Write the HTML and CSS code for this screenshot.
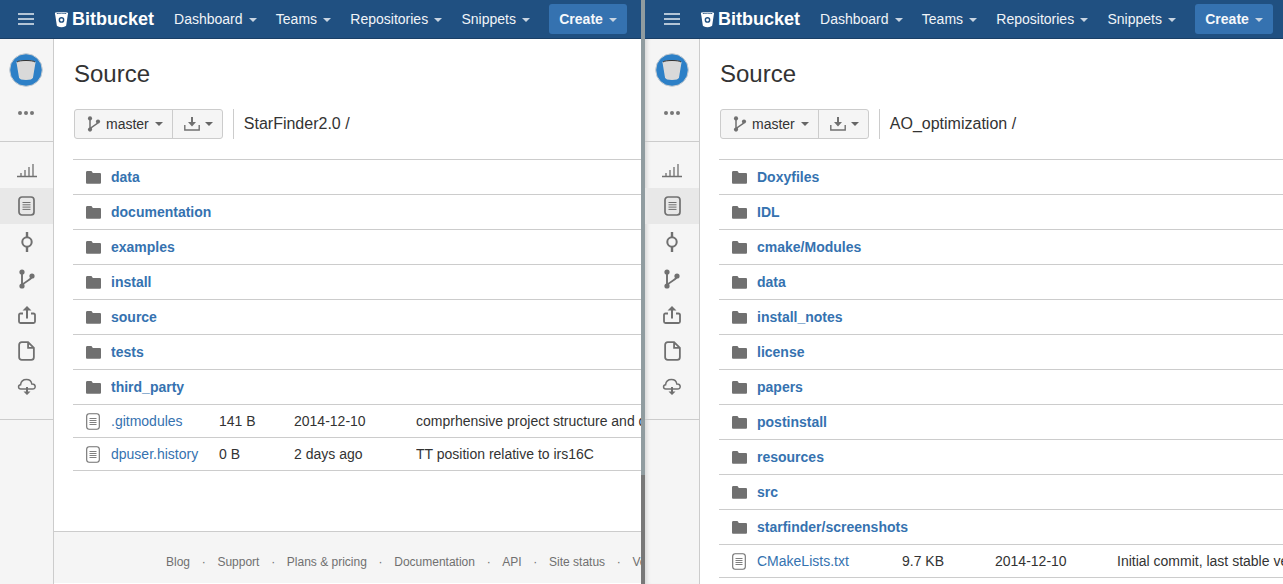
FILE: index.html
```html
<!DOCTYPE html>
<html lang="en">
  <head>
    <meta charset="UTF-8" />
    <title>Bitbucket Source</title>
    <link rel="stylesheet" href="styles.css">
  </head>
  <body>
    <svg class="defs" width="0" height="0">
      <defs>
        <symbol id="i-bucket" viewBox="0 0 16 18">
          <path fill="#fff" d="M1 2.200C1 .6 15 .6 15 2.200c0 .5-.2 1.500-.5 3L13 15.500c-.1.800-2 1.700-5 1.700s-4.900-.9-5-1.700L1.500 5.200C1.200 3.700 1 2.700 1 2.200z"/>
          <path fill="none" stroke="#205081" stroke-width="1" d="M3 2.600c2-.5 8-.5 10 0"/>
          <circle cx="8" cy="9.500" r="2.300" fill="none" stroke="#205081" stroke-width="1.500"/>
        </symbol>
        <symbol id="i-hamburger" viewBox="0 0 16 12">
          <path d="M0 1h16M0 6h16M0 11h16" stroke="#e4ebf2" stroke-width="1.500"/>
        </symbol>
        <symbol id="i-folder" viewBox="0 0 15 13">
          <path fill="#707070" d="M0 1.500C0 .7.500 0 1.300 0h3.400c.8 0 1.200.4 1.500 1L6.800 2h6.900c.8 0 1.300.5 1.300 1.300v8.200c0 .8-.5 1.300-1.300 1.300H1.300C.5 12.800 0 12.300 0 11.500z"/>
        </symbol>
        <symbol id="i-file" viewBox="0 0 14 17">
          <rect x=".7" y=".7" width="12.600" height="15.600" rx="2.500" fill="none" stroke="#707070" stroke-width="1.100"/>
          <path d="M3.500 5.500h7M3.500 7.500h7M3.500 9.500h7M3.500 11.500h7" stroke="#707070" stroke-width=".9"/>
        </symbol>
        <symbol id="i-file-nav" viewBox="0 0 17 20">
          <rect x="1" y="1" width="15" height="18" rx="3" fill="none" stroke="#707070" stroke-width="1.700"/>
          <path d="M4.500 6.500h8M4.500 8.800h8M4.500 11.100h8M4.500 13.400h8" stroke="#707070" stroke-width="1"/>
        </symbol>
        <symbol id="i-branch" viewBox="0 0 16 20">
          <circle cx="3" cy="3" r="2.600" fill="#707070"/>
          <circle cx="3" cy="17" r="2.600" fill="#707070"/>
          <circle cx="13" cy="7" r="2.600" fill="#707070"/>
          <path d="M3 3v14M13 7c0 4.500-7 4-10 10" fill="none" stroke="#707070" stroke-width="1.900"/>
        </symbol>
        <symbol id="i-download" viewBox="0 0 16 14">
          <path fill="#707070" d="M7 0h2v5h3L8 9.500 4 5h3z"/>
          <path d="M.8 8v5h14.400V8" fill="none" stroke="#707070" stroke-width="1.400"/>
        </symbol>
        <symbol id="i-overview" viewBox="0 0 20 14">
          <path d="M0 13.500h20M4 13V10M8 13V7M12 13V4M16 13V1" stroke="#707070" stroke-width="1.300"/>
        </symbol>
        <symbol id="i-commit" viewBox="0 0 12 20">
          <path d="M6 0v5.500M6 14.500v5.500" stroke="#707070" stroke-width="2.400"/>
          <circle cx="6" cy="10" r="4.700" fill="none" stroke="#707070" stroke-width="2"/>
        </symbol>
        <symbol id="i-upload" viewBox="0 0 18 18">
          <path fill="#707070" d="M9 0l4.500 4.500h-3.500v8H8v-8H4.500z"/>
          <path d="M5 7.500H2.500C1.500 7.500 1 8 1 9v6.500c0 1 .5 1.500 1.500 1.500h13c1 0 1.500-.5 1.500-1.500V9c0-1-.5-1.500-1.500-1.500H13" fill="none" stroke="#707070" stroke-width="1.800"/>
        </symbol>
        <symbol id="i-page" viewBox="0 0 16 19">
          <path d="M3.500 1h6L15 6.500v9c0 1.500-1 2.500-2.500 2.500h-9C2 18 1 17 1 15.500v-12C1 2 2 1 3.500 1zM9.500 1v5.500H15" fill="none" stroke="#707070" stroke-width="1.700"/>
        </symbol>
        <symbol id="i-cloud" viewBox="0 0 20 17">
          <path d="M5 10.500H3.800C1 10.500.7 6.500 3.600 6.200 4 2.500 7 1 9.500 1c3 0 5 2 5.300 4.500 4.200-.3 4.600 5 .7 5H5z" fill="none" stroke="#707070" stroke-width="1.500"/>
          <path fill="#707070" d="M9 8.500h2v4.500h2.500L10 16.500 6.500 13H9z"/>
        </symbol>
        <symbol id="i-repo" viewBox="0 0 34 34">
          <circle cx="17" cy="17" r="16.300" fill="#2d80c7" stroke="#c8ccd0" stroke-width="1"/>
          <path fill="#d9d9d9" d="M7.500 9.500c0-3 19-3 19 0l-2.500 15c-.3 1.700-3 2.500-7 2.500s-6.700-.8-7-2.500z"/>
          <path fill="none" stroke="#333" stroke-width="1" d="M8 9c1.500-2 16.500-2 18 0"/>
        </symbol>
      </defs>
    </svg>

    <div class="screens">
      <section class="window window-left">
        <header class="topbar">
          <svg class="hamburger"><use href="#i-hamburger"/></svg>
          <a class="brand"><svg class="brand-icon"><use href="#i-bucket"/></svg><span>Bitbucket</span></a>
          <nav class="mainnav">
            <a>Dashboard<i class="caret"></i></a>
            <a>Teams<i class="caret"></i></a>
            <a>Repositories<i class="caret"></i></a>
            <a>Snippets<i class="caret"></i></a>
          </nav>
          <a class="create">Create<i class="caret"></i></a>
        </header>
        <div class="body">
          <aside class="sidebar">
            <div class="side-top">
              <svg class="repo-avatar"><use href="#i-repo"/></svg>
              <div class="dots"><i></i><i></i><i></i></div>
            </div>
            <ul class="side-nav">
              <li><svg class="w20"><use href="#i-overview"/></svg></li>
              <li class="active"><svg class="w17"><use href="#i-file-nav"/></svg></li>
              <li><svg class="w12"><use href="#i-commit"/></svg></li>
              <li><svg class="w16"><use href="#i-branch"/></svg></li>
              <li><svg class="w18"><use href="#i-upload"/></svg></li>
              <li><svg class="w17"><use href="#i-page"/></svg></li>
              <li><svg class="w20"><use href="#i-cloud"/></svg></li>
            </ul>
          </aside>
          <main class="content">
            <h1>Source</h1>
            <div class="toolbar">
              <div class="btn-group">
                <button class="btn"><svg class="btn-branch"><use href="#i-branch"/></svg>master<i class="caret dark"></i></button>
                <button class="btn"><svg class="btn-dl"><use href="#i-download"/></svg><i class="caret dark"></i></button>
              </div>
              <div class="crumb">StarFinder2.0 /</div>
            </div>
            <table class="files files-left">
              <colgroup><col class="col-ic"><col class="col-name"><col class="col-size"><col class="col-date"><col class="col-msg"></colgroup>
              <tr class="dir"><td class="ic"><svg class="folder"><use href="#i-folder"/></svg></td><td colspan="4"><a>data</a></td></tr>
              <tr class="dir"><td class="ic"><svg class="folder"><use href="#i-folder"/></svg></td><td colspan="4"><a>documentation</a></td></tr>
              <tr class="dir"><td class="ic"><svg class="folder"><use href="#i-folder"/></svg></td><td colspan="4"><a>examples</a></td></tr>
              <tr class="dir"><td class="ic"><svg class="folder"><use href="#i-folder"/></svg></td><td colspan="4"><a>install</a></td></tr>
              <tr class="dir"><td class="ic"><svg class="folder"><use href="#i-folder"/></svg></td><td colspan="4"><a>source</a></td></tr>
              <tr class="dir"><td class="ic"><svg class="folder"><use href="#i-folder"/></svg></td><td colspan="4"><a>tests</a></td></tr>
              <tr class="dir"><td class="ic"><svg class="folder"><use href="#i-folder"/></svg></td><td colspan="4"><a>third_party</a></td></tr>
              <tr class="file"><td class="ic"><svg class="doc"><use href="#i-file"/></svg></td><td><a>.gitmodules</a></td><td>141 B</td><td>2014-12-10</td><td>comprhensive project structure and docs</td></tr>
              <tr class="file"><td class="ic"><svg class="doc"><use href="#i-file"/></svg></td><td><a>dpuser.history</a></td><td>0 B</td><td>2 days ago</td><td>TT position relative to irs16C</td></tr>
            </table>
            <footer class="footer">
              <a>Blog</a><b>·</b><a>Support</a><b>·</b><a>Plans &amp; pricing</a><b>·</b><a>Documentation</a><b>·</b><a>API</a><b>·</b><a>Site status</a><b>·</b><a>Version info</a>
            </footer>
          </main>
        </div>
      </section>

      <section class="window window-right">
        <header class="topbar">
          <svg class="hamburger"><use href="#i-hamburger"/></svg>
          <a class="brand"><svg class="brand-icon"><use href="#i-bucket"/></svg><span>Bitbucket</span></a>
          <nav class="mainnav">
            <a>Dashboard<i class="caret"></i></a>
            <a>Teams<i class="caret"></i></a>
            <a>Repositories<i class="caret"></i></a>
            <a>Snippets<i class="caret"></i></a>
          </nav>
          <a class="create">Create<i class="caret"></i></a>
        </header>
        <div class="body">
          <aside class="sidebar">
            <div class="side-top">
              <svg class="repo-avatar"><use href="#i-repo"/></svg>
              <div class="dots"><i></i><i></i><i></i></div>
            </div>
            <ul class="side-nav">
              <li><svg class="w20"><use href="#i-overview"/></svg></li>
              <li class="active"><svg class="w17"><use href="#i-file-nav"/></svg></li>
              <li><svg class="w12"><use href="#i-commit"/></svg></li>
              <li><svg class="w16"><use href="#i-branch"/></svg></li>
              <li><svg class="w18"><use href="#i-upload"/></svg></li>
              <li><svg class="w17"><use href="#i-page"/></svg></li>
              <li><svg class="w20"><use href="#i-cloud"/></svg></li>
            </ul>
          </aside>
          <main class="content">
            <h1>Source</h1>
            <div class="toolbar">
              <div class="btn-group">
                <button class="btn"><svg class="btn-branch"><use href="#i-branch"/></svg>master<i class="caret dark"></i></button>
                <button class="btn"><svg class="btn-dl"><use href="#i-download"/></svg><i class="caret dark"></i></button>
              </div>
              <div class="crumb">AO_optimization /</div>
            </div>
            <table class="files files-right">
              <colgroup><col class="col-ic"><col class="col-name"><col class="col-size"><col class="col-date"><col class="col-msg"></colgroup>
              <tr class="dir"><td class="ic"><svg class="folder"><use href="#i-folder"/></svg></td><td colspan="4"><a>Doxyfiles</a></td></tr>
              <tr class="dir"><td class="ic"><svg class="folder"><use href="#i-folder"/></svg></td><td colspan="4"><a>IDL</a></td></tr>
              <tr class="dir"><td class="ic"><svg class="folder"><use href="#i-folder"/></svg></td><td colspan="4"><a>cmake/Modules</a></td></tr>
              <tr class="dir"><td class="ic"><svg class="folder"><use href="#i-folder"/></svg></td><td colspan="4"><a>data</a></td></tr>
              <tr class="dir"><td class="ic"><svg class="folder"><use href="#i-folder"/></svg></td><td colspan="4"><a>install_notes</a></td></tr>
              <tr class="dir"><td class="ic"><svg class="folder"><use href="#i-folder"/></svg></td><td colspan="4"><a>license</a></td></tr>
              <tr class="dir"><td class="ic"><svg class="folder"><use href="#i-folder"/></svg></td><td colspan="4"><a>papers</a></td></tr>
              <tr class="dir"><td class="ic"><svg class="folder"><use href="#i-folder"/></svg></td><td colspan="4"><a>postinstall</a></td></tr>
              <tr class="dir"><td class="ic"><svg class="folder"><use href="#i-folder"/></svg></td><td colspan="4"><a>resources</a></td></tr>
              <tr class="dir"><td class="ic"><svg class="folder"><use href="#i-folder"/></svg></td><td colspan="4"><a>src</a></td></tr>
              <tr class="dir"><td class="ic"><svg class="folder"><use href="#i-folder"/></svg></td><td colspan="4"><a>starfinder/screenshots</a></td></tr>
              <tr class="file"><td class="ic"><svg class="doc"><use href="#i-file"/></svg></td><td><a>CMakeLists.txt</a></td><td>9.7 KB</td><td>2014-12-10</td><td>Initial commit, last stable version</td></tr>
            </table>
          </main>
        </div>
      </section>
    </div>
  </body>
</html>
```

FILE: styles.css
```css
html,
body {
  margin: 0;
  height: 584px;
  overflow: hidden;
  background: #fff;
}

body {
  font-family: "Liberation Sans", Arial, sans-serif;
  font-size: 14px;
  color: #333;
}

.defs {
  display: block;
  height: 0;
}

.screens {
  display: flex;
  height: 584px;
  width: 1283px;
}

.window {
  display: flex;
  flex-direction: column;
  overflow: hidden;
  height: 584px;
  flex: none;
}

.window-left {
  width: 645px;
  box-sizing: border-box;
  border-right: 4px solid #8f9a9e;
  border-image: linear-gradient(#909ca0 474px, #787878 474px) 1;
}

.window-right {
  width: 638px;
}

.topbar {
  display: flex;
  align-items: center;
  height: 38px;
  flex: none;
  background: #205081;
  border-bottom: 1px solid #1a3f66;
  color: #f0f4f8;
  white-space: nowrap;
}

.hamburger {
  width: 16px;
  height: 12px;
  margin-left: 18px;
  flex: none;
}

.window-right .hamburger {
  margin-left: 19px;
}

.brand {
  display: flex;
  align-items: center;
  margin-left: 20px;
  color: #fff;
  font-weight: 700;
  font-size: 18px;
}

.brand-icon {
  width: 15px;
  height: 17px;
  margin-right: 3px;
}

.mainnav {
  display: flex;
  margin-left: 20px;
}

.mainnav a {
  margin-right: 19.300px;
  font-size: 14px;
}

.caret {
  display: inline-block;
  margin-left: 6px;
  vertical-align: 2px;
  border-top: 4px solid #c9d5e2;
  border-left: 4px solid transparent;
  border-right: 4px solid transparent;
}

.caret.dark {
  border-top-color: #666;
}

.create {
  padding: 7px 10px;
  height: 16px;
  line-height: 16px;
  background: #3572b0;
  border-radius: 3px;
  font-weight: 700;
  font-size: 14px;
  color: #f5f8fb;
}

.body {
  display: flex;
  flex: 1;
  min-height: 0;
}

.sidebar {
  width: 53px;
  flex: none;
  background: #f5f5f5;
  border-right: 1px solid #ccc;
}

.window-right .sidebar {
  width: 54px;
  box-shadow: inset 5px 0 4px -3px rgba(0, 0, 0, 0.12);
}

.side-top {
  display: flex;
  flex-direction: column;
  align-items: center;
  height: 102px;
  border-bottom: 1px solid #ccc;
}

.repo-avatar {
  width: 34px;
  height: 34px;
  margin: 14px 1px 0 0;
}

.dots {
  display: flex;
  gap: 2px;
  margin: 24px 1px 0 0;
}

.dots i {
  width: 4px;
  height: 4px;
  border-radius: 50%;
  background: #777;
}

.side-nav {
  list-style: none;
  margin: 10px 0 0;
  padding: 0 0 15px;
  border-bottom: 1px solid #ccc;
}

.side-nav li {
  display: flex;
  align-items: center;
  justify-content: center;
  height: 36px;
  box-sizing: border-box;
}

.side-nav li:nth-child(n + 4) {
  padding-top: 2px;
}

.side-nav li.active {
  background: #e8e8e8;
}

.w20 {
  width: 20px;
  height: 18px;
}

.w18 {
  width: 18px;
  height: 18px;
}

.w17 {
  width: 17px;
  height: 20px;
}

.w16 {
  width: 16px;
  height: 20px;
}

.w12 {
  width: 12px;
  height: 20px;
}

.content {
  flex: 1;
  min-width: 0;
  display: flex;
  flex-direction: column;
  padding-left: 19px;
  overflow: hidden;
}

h1 {
  margin: 20px 0 0 1px;
  font-size: 24px;
  font-weight: 400;
  line-height: 30px;
  color: #333;
}

.toolbar {
  display: flex;
  align-items: center;
  margin: 20px 0 20px 1px;
}

.btn-group {
  display: flex;
  height: 30px;
  border: 1px solid #ccc;
  border-radius: 3px;
  background: #f5f5f5;
  box-sizing: border-box;
}

.btn {
  display: flex;
  align-items: center;
  padding: 0 9px 0 12px;
  border: 0;
  background: none;
  font: inherit;
  color: #333;
}

.btn + .btn {
  padding: 0 9px 0 11px;
  border-left: 1px solid #ccc;
}

.btn-branch {
  width: 14px;
  height: 16px;
  margin-right: 5px;
}

.btn-dl {
  width: 16px;
  height: 14px;
  margin-right: -1px;
}

.crumb {
  margin-left: 10px;
  padding-left: 10px;
  height: 30px;
  line-height: 30px;
  border-left: 1px solid #ccc;
  font-size: 16px;
  color: #333;
  white-space: nowrap;
}

.files {
  width: 700px;
  border-collapse: collapse;
  border-top: 1px solid #ccc;
  table-layout: fixed;
  flex: none;
}

.files td {
  padding: 0;
  border-bottom: 1px solid #ccc;
  white-space: nowrap;
  overflow: hidden;
}

.files a {
  color: #3572b0;
}

.dir td {
  height: 34px;
  font-weight: 700;
}

.file td {
  height: 32px;
}

.files td.ic {
  padding-left: 13px;
}

.col-ic {
  width: 38px;
}

.col-date {
  width: 122px;
}

.files-left .col-name {
  width: 108px;
}

.files-left .col-size {
  width: 75px;
}

.files-right .col-name {
  width: 145px;
}

.files-right .col-size {
  width: 93px;
}

.folder {
  display: block;
  width: 15px;
  height: 13px;
}

.doc {
  display: block;
  width: 14px;
  height: 17px;
}

.footer {
  display: flex;
  margin: 60px 0 0 -19px;
  height: 52px;
  box-sizing: border-box;
  padding: 23px 0 0 112px;
  background: #f5f5f5;
  border-top: 1px solid #ccc;
  font-size: 12px;
  color: #707070;
  white-space: nowrap;
}

.footer b {
  margin: 0 11.700px;
  font-weight: 400;
}
```
